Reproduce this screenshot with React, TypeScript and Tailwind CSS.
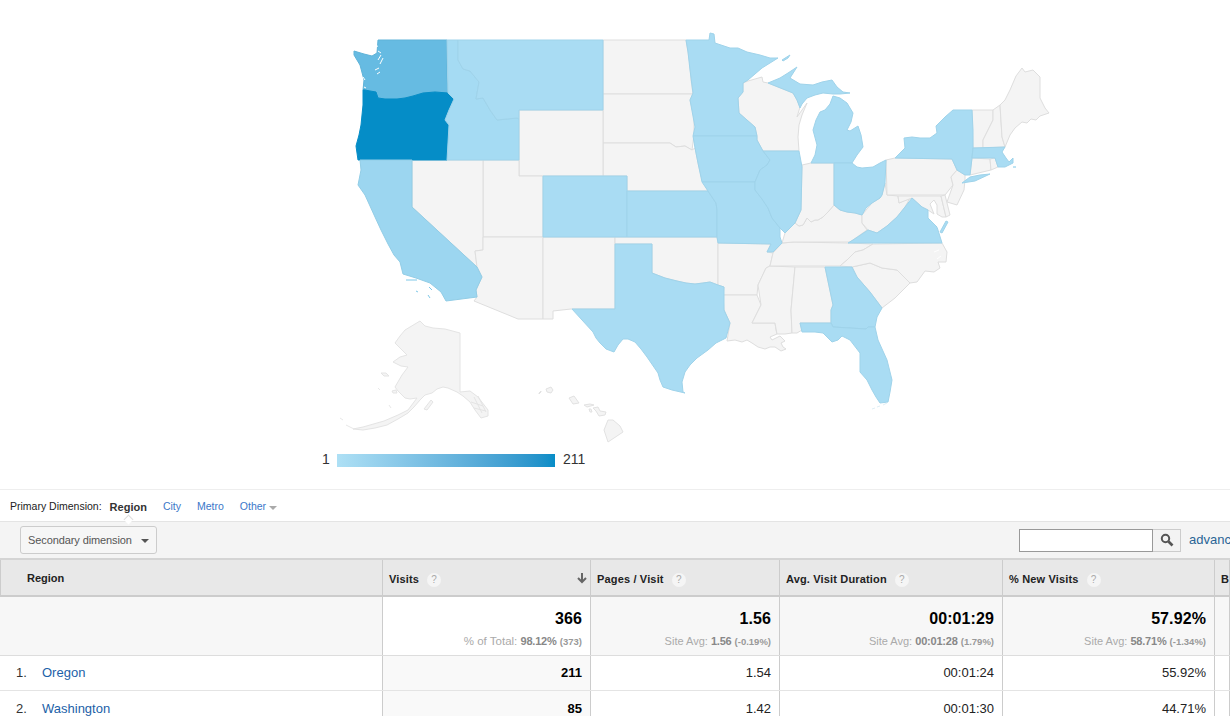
import React from 'react'

const FONT = "font-['Liberation_Sans',Arial,sans-serif]"

const GREY = '#f4f4f4'
const LIGHT = '#a9dcf3'
const LINE = '#dedede'
const BLUE_LINE = '#9fd3ea'

// state outlines in page pixels, traced from the reference
const states: { name: string; fill: string; stroke: string; pts: string }[] = [
  { name: 'ND', fill: GREY, stroke: LINE, pts: '603,40 686,40 688,52 690,65 691,80 693,94 603,94' },
  { name: 'SD', fill: GREY, stroke: LINE, pts: '603,94 693,94 690,100 694,117 694,135 692,150 685,146 676,147 670,143 603,143' },
  { name: 'NE', fill: GREY, stroke: LINE, pts: '603,143 670,143 676,147 685,146 692,150 695,148 698,163 702,180 708,191 627,191 627,176 603,176' },
  { name: 'WY', fill: GREY, stroke: LINE, pts: '519,110 603,110 603,176 519,176' },
  { name: 'UT', fill: GREY, stroke: LINE, pts: '483,160 519,160 519,176 543,176 543,237 483,237' },
  { name: 'NV', fill: GREY, stroke: LINE, pts: '412,160 483,160 483,250 475,251 477,267 412,207' },
  { name: 'AZ', fill: GREY, stroke: LINE, pts: '483,237 543,237 543,319 518,319 474,301 477,297 476,290 482,277 477,267 475,251 483,250' },
  { name: 'NM', fill: GREY, stroke: LINE, pts: '543,237 615,237 615,309 571,309 553,311 553,319 543,319' },
  { name: 'OK', fill: GREY, stroke: LINE, pts: '615,237 717,237 718,243 718,285 710,282 703,283 695,284 686,283 677,281 665,278 652,273 652,244 615,244' },
  { name: 'AR', fill: GREY, stroke: LINE, pts: '718,243 771,244 767,252 773,253 770,266 766,268 758,285 757,295 723,295 724,287 718,285' },
  { name: 'LA', fill: GREY, stroke: LINE, pts: '723,295 757,295 759,300 761,305 752,323 775,323 776,330 777,334 770,337 772,340 780,336 785,341 781,343 783,347 786,349 781,351 775,347 770,347 765,349 758,347 752,343 747,340 742,342 735,340 727,341 730,323 724,310' },
  { name: 'MS', fill: GREY, stroke: LINE, pts: '770,266 795,267 791,310 792,333 785,334 777,334 775,323 752,323 761,305 758,285 766,268' },
  { name: 'AL', fill: GREY, stroke: LINE, pts: '795,267 825,267 833,305 831,310 831,323 800,323 802,330 797,333 795,333 792,333 791,310' },
  { name: 'TN', fill: GREY, stroke: LINE, pts: '782,243 795,242 848,243 873,244 863,250 855,252 847,260 840,266 770,266 773,253' },
  { name: 'KY', fill: GREY, stroke: LINE, pts: '795,223 799,226 803,225 807,218 811,222 815,220 818,220 823,217 828,212 834,205 840,210 847,212 855,213 862,215 862,223 867,230 850,242 793,242 782,243 785,233' },
  { name: 'IN', fill: GREY, stroke: LINE, pts: '802,165 811,163 834,163 834,205 828,212 823,217 818,220 815,220 811,222 807,218 803,225 799,226 795,223 801,210' },
  { name: 'WI', fill: GREY, stroke: LINE, pts: '748,81 762,77 763,82 768,83 793,93 797,100 800,107 797,117 807,103 802,115 799,125 798,137 799,151 763,151 757,140 757,136 755,127 747,120 739,113 738,98 743,92 743,83' },
  { name: 'WV', fill: GREY, stroke: LINE, pts: '862,215 872,203 880,198 882,195 885,183 887,195 898,196 899,203 910,198 905,207 897,217 887,226 877,233 868,230 862,223' },
  { name: 'PA', fill: GREY, stroke: LINE, pts: '886,160 895,158 952,159 957,170 951,177 953,185 945,195 887,195' },
  { name: 'MD', fill: GREY, stroke: LINE, pts: '898,196 941,196 946,217 942,217 937,214 937,205 934,200 930,204 934,214 928,210 922,207 912,198 899,203' },
  { name: 'DE', fill: GREY, stroke: LINE, pts: '941,196 945,195 950,215 946,217' },
  { name: 'NJ', fill: GREY, stroke: LINE, pts: '951,177 957,170 965,175 965,180 964,190 957,205 947,202 953,185' },
  { name: 'VT', fill: GREY, stroke: LINE, pts: '972,110 993,110 993,120 983,140 983,148 973,148' },
  { name: 'NH', fill: GREY, stroke: LINE, pts: '993,110 1000,105 1002,137 1005,147 983,148 983,140 993,120' },
  { name: 'ME', fill: GREY, stroke: LINE, pts: '1000,105 1005,100 1010,90 1016,76 1022,68 1025,72 1033,70 1040,77 1040,98 1045,108 1049,113 1040,116 1036,120 1031,119 1027,123 1022,122 1015,128 1010,135 1005,147 1002,137' },
  { name: 'CT', fill: GREY, stroke: LINE, pts: '972,158 990,159 991,170 970,175' },
  { name: 'RI', fill: GREY, stroke: LINE, pts: '990,159 995,158 998,167 991,170' },
  { name: 'SC', fill: GREY, stroke: LINE, pts: '852,267 870,263 882,268 897,270 910,283 895,298 882,308 870,292 857,277' },
  { name: 'NC', fill: GREY, stroke: LINE, pts: '840,266 847,260 855,252 863,250 873,244 942,243 947,252 946,262 938,262 940,268 934,272 925,271 917,282 910,283 897,270 882,268 870,263 852,267' },
  { name: 'AK', fill: GREY, stroke: '#e4e4e4', pts: '420,321 425,326 433,328 445,329 460,333 460,392 470,391 478,397 488,410 488,416 481,418 475,410 470,402 463,396 457,392 448,388 443,387 437,389 432,393 425,395 420,400 414,407 408,413 398,419 387,425 375,428 363,430 353,429 363,427 384,421 398,415 408,410 417,398 410,399 405,398 398,391 395,387 402,375 408,367 401,366 393,362 400,357 407,355 401,349 395,343 400,336 405,330' },
  { name: 'KODIAK', fill: GREY, stroke: '#e4e4e4', pts: '424,409 431,400 433,402 427,410' },
  { name: 'STL', fill: GREY, stroke: '#e4e4e4', pts: '381,373 386,373 389,376 384,376' },
  { name: 'NUN', fill: GREY, stroke: '#e4e4e4', pts: '392,391 396,390 397,393 393,393' },
  { name: 'HI1', fill: GREY, stroke: '#e2e2e2', pts: '608,420 613,420 620,426 623,432 617,436 608,442 604,430' },
  { name: 'HI2', fill: GREY, stroke: '#e2e2e2', pts: '593,408 598,407 600,411 606,412 605,415 599,416 596,411' },
  { name: 'HI3', fill: GREY, stroke: '#e2e2e2', pts: '569,398 574,396 579,403 573,404' },
  { name: 'HI4', fill: GREY, stroke: '#e2e2e2', pts: '546,389 551,387 553,390 551,393 547,392' },
  { name: 'HI5', fill: GREY, stroke: '#e2e2e2', pts: '584,405 590,404 594,405 587,407' },
  { name: 'HI6', fill: GREY, stroke: '#e2e2e2', pts: '589,409 591,409 592,412 590,412' },
  { name: 'HI7', fill: GREY, stroke: '#e2e2e2', pts: '539,393 541,391 541,392 539,394' },
  { name: 'WA', fill: '#66bbe2', stroke: '#5fb3d8', pts: '378,40 447,40 447,75 448,93 435,92 423,93 413,96 405,98 397,99 385,99 378,98 376,92 370,91 365,90 363,90 364,80 360,65 354,55 354,51 364,54 372,56 377,53' },
  { name: 'OR', fill: '#058dc7', stroke: '#058dc7', pts: '363,90 365,90 370,91 376,92 378,98 385,99 397,99 405,98 413,96 423,93 435,92 448,93 454,99 449,110 445,120 449,125 447,160 358,160 356,146 359,135 361,125 363,105' },
  { name: 'CA', fill: '#9cd6f0', stroke: '#92cde6', pts: '360,160 412,160 412,207 477,267 482,277 476,290 477,297 446,301 441,292 430,283 416,278 403,274 400,262 394,255 388,244 381,230 375,217 370,206 365,195 358,185 361,170' },
  { name: 'ID', fill: '#a5dbf3', stroke: BLUE_LINE, pts: '447,40 458,40 458,60 463,69 470,71 479,82 476,99 483,98 490,110 497,120 507,119 517,118 519,119 519,160 447,160 449,125 445,120 449,110 454,99 448,93' },
  { name: 'MT', fill: LIGHT, stroke: BLUE_LINE, pts: '458,40 603,40 603,110 519,110 519,119 517,118 507,119 497,120 490,110 483,98 476,99 479,82 470,71 463,69 458,60' },
  { name: 'CO', fill: LIGHT, stroke: BLUE_LINE, pts: '543,176 627,176 627,237 543,237' },
  { name: 'KS', fill: LIGHT, stroke: BLUE_LINE, pts: '627,191 708,191 716,203 717,210 717,237 627,237' },
  { name: 'TX', fill: LIGHT, stroke: BLUE_LINE, pts: '615,244 652,244 652,273 665,278 677,281 686,283 695,284 703,283 710,282 718,285 724,287 724,310 730,323 726,338 716,343 708,350 697,358 690,365 685,372 682,382 683,392 685,393 672,390 663,387 660,380 658,373 647,357 641,349 635,342 628,339 623,339 618,345 614,352 606,349 600,343 596,338 593,332 582,320 572,309 615,309' },
  { name: 'MN', fill: LIGHT, stroke: BLUE_LINE, pts: '686,40 709,40 710,33 714,34 715,43 730,48 738,48 747,52 760,55 770,58 778,58 762,68 748,80 743,83 743,92 738,98 739,113 747,120 755,127 757,136 693,136 695,127 690,100 693,93 690,70 688,52' },
  { name: 'IA', fill: LIGHT, stroke: BLUE_LINE, pts: '693,136 757,136 757,140 763,151 770,160 767,165 760,170 755,182 702,182 698,163 695,148' },
  { name: 'MO', fill: LIGHT, stroke: BLUE_LINE, pts: '702,182 755,182 755,190 762,199 768,208 772,218 780,228 780,237 782,243 773,252 767,252 771,244 718,243 717,237 717,210 716,203 708,191' },
  { name: 'IL', fill: LIGHT, stroke: BLUE_LINE, pts: '763,151 799,151 802,167 801,210 795,223 785,233 780,228 772,218 768,208 762,199 755,190 755,182 760,170 767,165 770,160' },
  { name: 'MIU', fill: LIGHT, stroke: BLUE_LINE, pts: '768,83 780,78 788,73 797,67 790,78 800,84 813,85 822,82 832,80 837,87 843,92 850,93 840,94 833,94 823,93 815,95 807,98 802,104 800,108 797,100 793,93' },
  { name: 'MIR', fill: LIGHT, stroke: BLUE_LINE, pts: '782,60 790,55 788,58 783,61' },
  { name: 'MIL', fill: LIGHT, stroke: BLUE_LINE, pts: '811,163 815,155 817,145 813,130 816,120 820,112 825,110 830,104 833,96 840,98 847,103 853,113 851,122 847,130 850,131 858,126 861,135 863,147 857,155 852,163' },
  { name: 'OH', fill: LIGHT, stroke: BLUE_LINE, pts: '834,163 852,163 857,167 862,168 873,167 880,163 886,160 885,183 882,195 880,198 872,203 866,208 862,215 855,213 847,212 840,210 834,205' },
  { name: 'NY', fill: LIGHT, stroke: BLUE_LINE, pts: '895,158 905,148 904,138 912,137 920,138 930,138 937,133 936,126 945,117 953,110 972,110 973,130 973,148 972,158 970,175 965,175 957,170 952,159' },
  { name: 'NYL', fill: LIGHT, stroke: BLUE_LINE, pts: '962,183 970,177 980,175 990,174 975,181' },
  { name: 'MA', fill: LIGHT, stroke: BLUE_LINE, pts: '973,148 1005,147 1002,152 1006,158 1009,162 1013,158 1013,163 1005,167 998,167 995,158 972,158' },
  { name: 'VA', fill: LIGHT, stroke: BLUE_LINE, pts: '848,243 853,240 868,230 877,233 887,226 897,217 905,207 912,198 922,207 928,210 928,218 937,227 942,243' },
  { name: 'VAE', fill: LIGHT, stroke: BLUE_LINE, pts: '942,233 948,222 946,221 940,232' },
  { name: 'GA', fill: LIGHT, stroke: BLUE_LINE, pts: '825,267 852,267 857,277 870,292 882,308 877,317 875,327 868,327 866,329 833,327 831,323 831,310 833,305' },
  { name: 'FL', fill: LIGHT, stroke: BLUE_LINE, pts: '800,323 831,323 833,327 866,329 868,327 875,327 878,340 887,360 892,380 890,392 888,402 880,403 876,397 872,390 867,380 860,372 860,353 850,340 842,336 838,340 832,342 823,333 815,332 807,332 802,332' },
]

const blueIslands = [
  '406,280 417,280', '429,287 432,290', '416,291 418,292', '428,295 430,298', '1013,167 1016,167',
]

const keys = ['872,409 875,408', '877,407 880,406', '883,405 887,403']

const aleutians = ['340,418 343,420', '354,429 346,425', '389,405 391,408', '378,388 380,390']

const UsMap = () => (
  <svg viewBox="0 0 1230 445" className="block h-[445px] w-[1230px]">
    {states.map((s) => (
      <polygon key={s.name} points={s.pts} fill={s.fill} stroke={s.stroke} strokeWidth={1} strokeLinejoin="round" />
    ))}
    {/* puget sound */}
    <path d="M375 47l3-1M378 51l3 2M381 55l-3 5M383 58l-3 6M375 70l4-2M380 72l-3 2M363 77l2 3M364 87l2 1" fill="none" stroke="#ffffff" strokeWidth={1} />
    {/* panhandle hatching */}
    <path d="M474 397l8 16M478 396l8 16M471 402l12 4M474 408l12 3" fill="none" stroke="#e4e4e4" strokeWidth={1} />
    {/* chesapeake, pamlico */}
    <path d="M939 220l-4 2M941 225l-4 2M939 250l-5 2M941 256l-4 3" fill="none" stroke="#ffffff" strokeWidth={1} />
    {blueIslands.map((p) => (
      <polyline key={p} points={p} stroke="#7fc8e8" strokeWidth={1} fill="none" />
    ))}
    {keys.map((p) => (
      <polyline key={p} points={p} stroke="#dfeef5" strokeWidth={1} fill="none" />
    ))}
    {aleutians.map((p) => (
      <polyline key={p} points={p} stroke="#e8e8e8" strokeWidth={1} fill="none" />
    ))}
  </svg>
)

const Help = () => (
  <span className="ml-2 flex h-[14px] w-[14px] items-center justify-center rounded-full bg-[#f5f5f5] text-[10px] font-normal tracking-normal text-[#aaaaaa]">?</span>
)

const cols = 'grid grid-cols-[383px_208px_189px_223px_212px_15px]'

const Head = ({ label, sort = false }: { label: string; sort?: boolean }) => (
  <div className="flex items-center border-r border-[#cccccc] pt-[4px] pl-[6px] text-[11px] font-bold tracking-[0.16px] text-[#222222]">
    {label}
    <Help />
    {sort && (
      <svg viewBox="0 0 12 12" className="mr-[2px] mb-[4px] ml-auto h-3 w-3">
        <path d="M6 1v9M2 6l4 4 4-4" fill="none" stroke="#666666" strokeWidth={2} />
      </svg>
    )}
  </div>
)

const Total = ({ value, sub, bold, extra, white = false }: { value: string; sub: string; bold: string; extra: string; white?: boolean }) => (
  <div className={`flex flex-col items-end border-r border-[#cccccc] pt-[13px] pr-2 ${white ? 'bg-white' : 'bg-[#f7f7f7]'}`}>
    <div className="text-[16px] leading-[18px] font-bold tracking-[0.1px] text-black">{value}</div>
    <div className={`mt-[7px] leading-[12px] whitespace-nowrap text-[#aaaaaa] ${white ? 'text-[11.5px]' : 'text-[11px]'}`}>
      {sub} <span className="text-[11px] font-bold tracking-[-0.2px] text-[#888888]">{bold}</span>{' '}
      <span className="text-[9.5px] font-bold text-[#999999]">{extra}</span>
    </div>
  </div>
)

const rows = [
  { n: '1.', name: 'Oregon', visits: '211', pages: '1.54', dur: '00:01:24', nv: '55.92%' },
  { n: '2.', name: 'Washington', visits: '85', pages: '1.42', dur: '00:01:30', nv: '44.71%' },
]

const Cell = ({ children, sorted = false, bold = false }: { children: React.ReactNode; sorted?: boolean; bold?: boolean }) => (
  <div className={`flex items-center justify-end border-r border-[#cccccc] pr-2 text-[13px] ${sorted ? 'bg-[#f9f9f9]' : 'bg-white'} ${bold ? 'font-bold text-black' : 'text-[#222222]'}`}>
    {children}
  </div>
)

export default function App() {
  return (
    <div className={`h-[716px] w-[1230px] overflow-hidden bg-white ${FONT}`}>
      {/* map */}
      <div className="h-[490px] border-b border-[#eeeeee]">
        <UsMap />
        <div className="mt-[7px] flex items-center pl-[322px] text-[14px] leading-[14px] text-[#333333]">
          <span className="w-[15px] pb-[2px]">1</span>
          <div className="h-[13px] w-[218px] bg-gradient-to-r from-[#aee0f5] to-[#058dc7]" />
          <span className="ml-2 pb-[2px]">211</span>
        </div>
      </div>

      {/* primary dimension */}
      <div className="flex h-[31px] items-center pt-[3px] pl-[10px] text-[10.5px] text-[#222222]">
        <span>Primary Dimension:</span>
        <span className="relative ml-[8px] text-[11px] font-bold text-[#333333]">
          Region
          <span className="absolute top-[17px] left-[15px] h-[7px] w-[7px] rotate-45 border-t border-l border-[#dddddd] bg-white" />
        </span>
        <span className="ml-4 text-[#3b78c9]">City</span>
        <span className="ml-4 text-[#3b78c9]">Metro</span>
        <span className="ml-4 text-[#3b78c9]">Other</span>
        <span className="mt-[2px] ml-[3px] h-0 w-0 border-x-[4px] border-t-[4px] border-x-transparent border-t-[#aaaaaa]" />
      </div>

      {/* toolbar */}
      <div className="flex h-[37px] items-center border-t border-[#e4e4e4] bg-[#f4f4f4] pl-5">
        <div className="flex h-[28px] w-[137px] items-center rounded-[3px] border border-[#cccccc] bg-[#f6f6f6] pl-[7px] text-[11px] tracking-[-0.1px] text-[#555555]">
          Secondary dimension
          <span className="mt-[1px] ml-[9px] h-0 w-0 border-x-[4px] border-t-[4px] border-x-transparent border-t-[#555555]" />
        </div>
        <div className="ml-auto flex items-center">
          <div className="h-[23px] w-[134px] border border-[#999999] bg-white" />
          <div className="flex h-[23px] w-[28px] items-center justify-center border border-l-0 border-[#cccccc] bg-[#f3f3f3]">
            <svg viewBox="0 0 14 14" className="h-[14px] w-[14px]">
              <circle cx="5.5" cy="5.5" r="3.7" fill="none" stroke="#555555" strokeWidth={2} />
              <path d="M8.5 8.5l4 4" stroke="#555555" strokeWidth={2.6} />
            </svg>
          </div>
          <span className="ml-2 w-[41px] overflow-hidden text-[13px] text-[#2a6496]">advanced</span>
        </div>
      </div>

      {/* table */}
      <div className="border-b border-[#cccccc]">
        <div className={`${cols} h-[39px] border-y-2 border-y-[#d4d4d4] border-b-[#cccccc] bg-[#e8e8e8]`}>
          <div className="flex items-center border-x border-[#cccccc] pt-[1px] pl-[26px] text-[11px] font-bold text-[#222222]">Region</div>
          <Head label="Visits" sort />
          <Head label="Pages / Visit" />
          <Head label="Avg. Visit Duration" />
          <Head label="% New Visits" />
          <div className="flex items-center border-r border-[#cccccc] pt-[4px] pl-[6px] text-[11px] font-bold text-[#222222]">B</div>
        </div>
        <div className={`${cols} h-[59px] border-b border-[#dddddd] bg-[#f7f7f7]`}>
          <div className="border-r border-[#cccccc]" />
          <Total white value="366" sub="% of Total:" bold="98.12%" extra="(373)" />
          <Total value="1.56" sub="Site Avg:" bold="1.56" extra="(-0.19%)" />
          <Total value="00:01:29" sub="Site Avg:" bold="00:01:28" extra="(1.79%)" />
          <Total value="57.92%" sub="Site Avg:" bold="58.71%" extra="(-1.34%)" />
          <div className="border-r border-[#cccccc]" />
        </div>
        {rows.map((r, i) => (
          <div key={r.n} className={`${cols} h-[35px] ${i === 0 ? 'border-b border-[#e4e4e4]' : ''}`}>
            <div className="flex items-center border-r border-[#cccccc] pl-4 text-[13px]">
              <span className="w-[26px] text-[#333333]">{r.n}</span>
              <span className="text-[#1c5fa8]">{r.name}</span>
            </div>
            <Cell sorted bold>{r.visits}</Cell>
            <Cell>{r.pages}</Cell>
            <Cell>{r.dur}</Cell>
            <Cell>{r.nv}</Cell>
            <div className="border-r border-[#cccccc]" />
          </div>
        ))}
      </div>
    </div>
  )
}
